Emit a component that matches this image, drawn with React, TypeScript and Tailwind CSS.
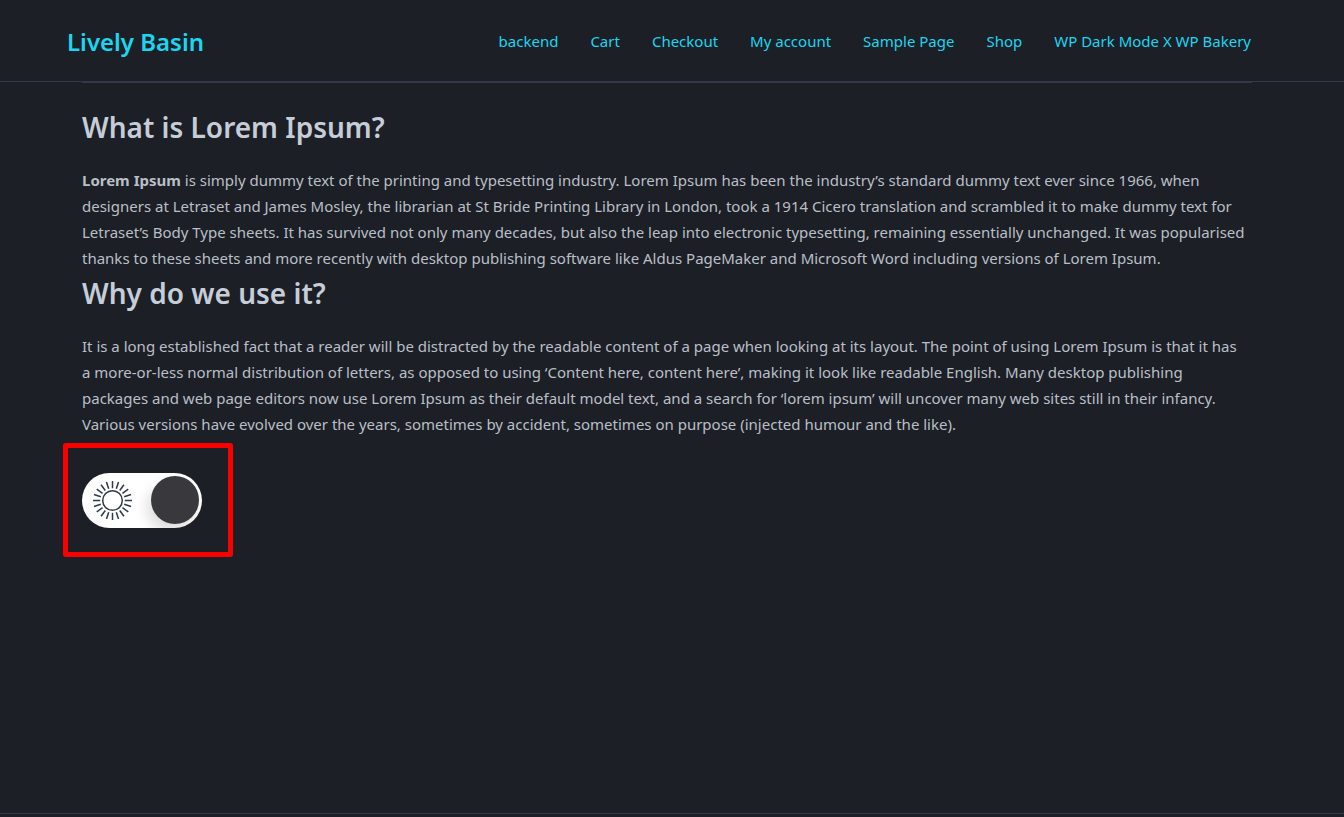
import { useState } from "react";

const navLinks = [
  "backend",
  "Cart",
  "Checkout",
  "My account",
  "Sample Page",
  "Shop",
  "WP Dark Mode X WP Bakery",
];

// one ray every 18 degrees
const rays = Array.from({ length: 20 }, (_, i) => i * 18);

const SunIcon = () => (
  <svg viewBox="0 0 40 40" className="h-10 w-10" fill="none" stroke="#2f3a48" aria-hidden="true">
    <circle cx="19.5" cy="20.5" r="9.8" strokeWidth="1.5" />
    {rays.map((angle) => (
      <line
        key={angle}
        x1="19.5"
        y1="1"
        x2="19.5"
        y2="8.2"
        strokeWidth="1.5"
        transform={`rotate(${angle} 19.5 20.5)`}
      />
    ))}
  </svg>
);

const DarkModeSwitch = () => {
  const [dark, setDark] = useState(true);

  return (
    <label className="relative flex h-[55px] w-[120px] cursor-pointer items-center justify-between overflow-hidden rounded-full bg-white pr-[3px] pl-[11px]">
      <input
        type="checkbox"
        role="switch"
        aria-label="Dark mode"
        className="absolute inset-0 cursor-pointer opacity-0"
        checked={dark}
        onChange={(e) => setDark(e.target.checked)}
      />
      <SunIcon />
      <span className="mb-px h-12 w-12 rounded-full bg-[#39383d] shadow-[-4px_8px_14px_rgba(0,0,0,0.14)]" />
    </label>
  );
};

const Header = () => (
  <header className="flex h-[82px] items-center justify-between border-b border-[#35374a] pt-0.5 pr-[93px] pl-[67px] text-[#1cd5ef]">
    <a href="#" className="text-[24px] font-semibold">
      Lively Basin
    </a>
    <nav>
      <ul className="flex gap-8 text-[15px]">
        {navLinks.map((link) => (
          <li key={link}>
            <a href="#">{link}</a>
          </li>
        ))}
      </ul>
    </nav>
  </header>
);

const App = () => {
  return (
    <div className="flex min-h-screen flex-col bg-[#1d1f26] font-['Noto_Sans',sans-serif] text-[#b9bfc6]">
      <Header />

      <main className="mr-[92px] ml-[82px] grow border-t border-[#35374a] pr-1 text-[15px] leading-[26px]">
        <h2 className="mt-6 mb-5 text-[28px] leading-[40px] font-semibold text-[#c5ced8]">
          What is Lorem Ipsum?
        </h2>
        <p>
          <strong>Lorem Ipsum</strong> is simply dummy text of the printing and typesetting industry.
          Lorem Ipsum has been the industry’s standard dummy text ever since 1966, when designers at
          Letraset and James Mosley, the librarian at St Bride Printing Library in London, took a 1914
          Cicero translation and scrambled it to make dummy text for Letraset’s Body Type sheets. It has
          survived not only many decades, but also the leap into electronic typesetting, remaining
          essentially unchanged. It was popularised thanks to these sheets and more recently with
          desktop publishing software like Aldus PageMaker and Microsoft Word including versions of
          Lorem Ipsum.
        </p>

        <h2 className="mt-0.5 mb-5 text-[28px] leading-[40px] font-semibold text-[#c5ced8]">
          Why do we use it?
        </h2>
        <p>
          It is a long established fact that a reader will be distracted by the readable content of a
          page when looking at its layout. The point of using Lorem Ipsum is that it has a more-or-less
          normal distribution of letters, as opposed to using ‘Content here, content here’, making it
          look like readable English. Many desktop publishing packages and web page editors now use
          Lorem Ipsum as their default model text, and a search for ‘lorem ipsum’ will uncover many web
          sites still in their infancy. Various versions have evolved over the years, sometimes by
          accident, sometimes on purpose (injected humour and the like).
        </p>

        <div className="mt-1.5 -ml-[19px] flex h-[114px] w-[170px] items-center rounded-[3px] border-[5px] border-[#fb0000] pl-[14px]">
          <DarkModeSwitch />
        </div>
      </main>

      <footer className="h-1 border-t border-[#35374a]" />
    </div>
  );
};

export default App;
